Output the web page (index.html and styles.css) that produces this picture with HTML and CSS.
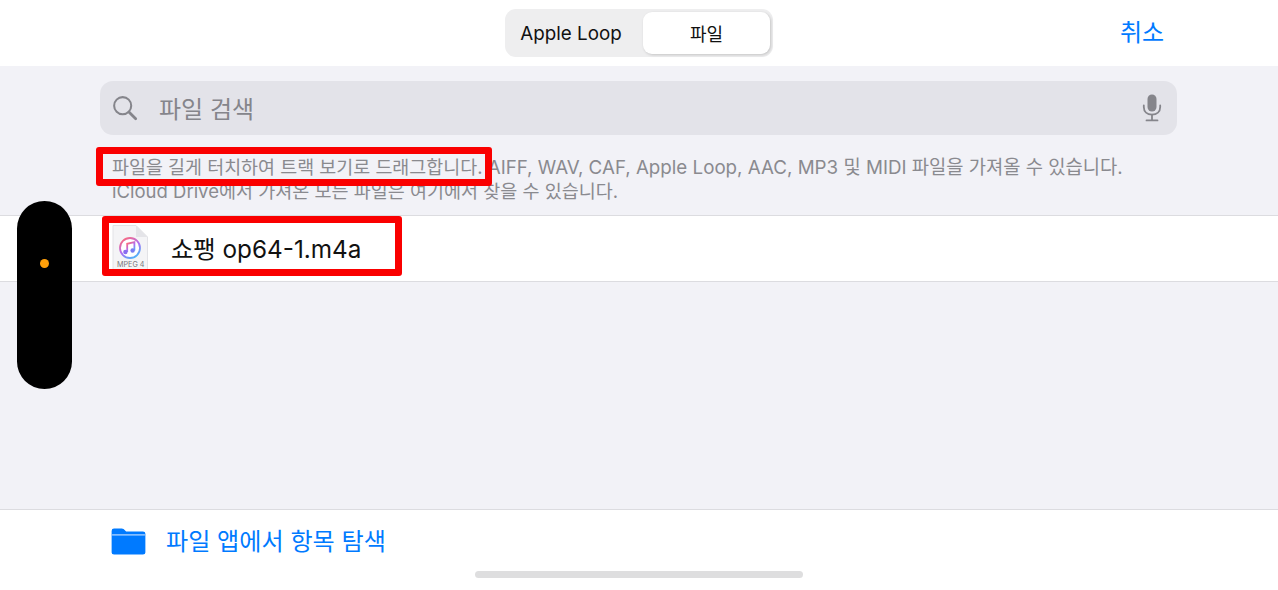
FILE: index.html
```html
<!DOCTYPE html>
<html lang="ko">
<head>
    <meta charset="UTF-8">
    <meta name="viewport" content="width=device-width, initial-scale=1.0">
    <title>파일 검색</title>
    <link rel="stylesheet" href="styles.css">
</head>
<body>
    <div class="screen">
        <header class="topbar">
            <div class="segmented">
                <div class="segment">Apple Loop</div>
                <div class="segment selected">파일</div>
            </div>
            <a class="cancel">취소</a>
        </header>

        <main class="content">
            <div class="search">
                <svg class="search-icon" width="26" height="26" viewBox="0 0 28 28" fill="none" stroke="#85858b">
                    <circle cx="11.5" cy="11.5" r="9.2" stroke-width="2.2"/>
                    <path d="M18.5 18.5 L25.5 25.5" stroke-width="3" stroke-linecap="round"/>
                </svg>
                <span class="search-text">파일 검색</span>
                <svg class="mic-icon" width="20" height="28" viewBox="0 0 20 28" fill="none">
                    <rect x="5.5" y="0.5" width="9" height="17" rx="4.5" fill="#85858b"/>
                    <path d="M1.8 11.5 V13 C1.8 17.8 5.2 20.6 10 20.6 C14.8 20.6 18.2 17.8 18.2 13 V11.5" stroke="#85858b" stroke-width="1.8" stroke-linecap="round"/>
                    <path d="M10 20.6 V26 M4.5 26.4 H15.5" stroke="#85858b" stroke-width="1.8" stroke-linecap="round"/>
                </svg>
            </div>

            <p class="hint"><span class="hint-first">파일을 길게 터치하여 트랙 보기로 드래그합니다.</span> <span class="hint-rest">AIFF, WAV, CAF, Apple Loop, AAC, MP3 및 MIDI 파일을 가져올 수 있습니다.</span><br>iCloud Drive에서 가져온 모든 파일은 여기에서 찾을 수 있습니다.</p>

            <div class="file-row">
                <svg class="file-icon" width="36" height="46" viewBox="0 0 36 46">
                    <defs>
                        <linearGradient id="ring" x1="0.2" y1="0" x2="0.8" y2="1">
                            <stop offset="0" stop-color="#fb6a7d"/>
                            <stop offset="0.5" stop-color="#b06cf2"/>
                            <stop offset="1" stop-color="#45b8f8"/>
                        </linearGradient>
                    </defs>
                    <path d="M1 0.5 H24 L35.5 12 V46 H1 Z" fill="#f4f4f6" stroke="#e2e2e6"/>
                    <path d="M24 0.5 V12 H35.5 Z" fill="#e4e4e8"/>
                    <circle cx="18" cy="23" r="10" fill="#fff" stroke="url(#ring)" stroke-width="1.8"/>
                    <path d="M15.2 27 V18.8 L22.4 17.2 V25.5" fill="none" stroke="url(#ring)" stroke-width="1.8"/>
                    <circle cx="13.4" cy="27" r="2.2" fill="#8a6cf0"/>
                    <circle cx="20.6" cy="25.5" r="2.2" fill="#7a7cf2"/>
                </svg>
                <span class="file-label">MPEG 4</span>
                <span class="file-name">쇼팽 op64-1.m4a</span>
            </div>
        </main>

        <footer class="bottombar">
            <div class="browse">
                <svg width="35" height="27" viewBox="0 0 36 28">
                    <path d="M0.5 3 Q0.5 0.5 3 0.5 H11 Q13 0.5 14.5 2.5 L15.5 3.5 H33 Q35.5 3.5 35.5 6 V25.5 Q35.5 27.5 33 27.5 H3 Q0.5 27.5 0.5 25.5 Z" fill="#007aff"/>
                    <rect x="1" y="6.5" width="34" height="1.3" fill="#b5d7ff"/>
                </svg>
                <span class="browse-text">파일 앱에서 항목 탐색</span>
            </div>
            <div class="home-indicator"></div>
        </footer>

        <!-- annotations and the floating pill sit over the screenshot -->
        <div class="mark mark-hint"></div>
        <div class="mark mark-file"></div>
        <div class="pill"><span class="pill-dot"></span></div>
    </div>
</body>
</html>
```

FILE: styles.css
```css
* {
    margin: 0;
    padding: 0;
    box-sizing: border-box;
}

html, body {
    width: 100%;
    height: 100%;
    overflow: hidden;
}

body {
    font-family: Inter, "Noto Sans CJK KR", sans-serif;
    background-color: #f2f2f7;
}

.screen {
    position: relative;
    width: 1278px;
    height: 590px;
    display: flex;
    flex-direction: column;
}

.topbar {
    height: 66px;
    background-color: #fff;
    position: relative;
    display: flex;
    justify-content: center;
    padding-top: 9px;
}

.segmented {
    width: 268px;
    height: 48px;
    background-color: #eeeeef;
    border-radius: 11px;
    padding: 3px;
    display: flex;
    gap: 2px;
}

.segment {
    flex: 1;
    display: flex;
    align-items: center;
    justify-content: center;
    font-size: 18.8px;
    color: #111;
}

.segment:first-child {
    flex: 0 0 133px;
    padding-right: 7px;
}

.segment.selected {
    background-color: #fff;
    border-radius: 9px;
    box-shadow: 1px 1px 3px rgba(0, 0, 0, 0.18);
    font-size: 18px;
}

.cancel {
    position: absolute;
    top: 16px;
    left: 1120px;
    font-size: 24px;
    line-height: 34px;
    color: #007aff;
}

.content {
    flex: 1;
    padding-top: 15px;
}

.search {
    margin: 0 101px 0 100px;
    height: 54px;
    background-color: #e3e3e9;
    border-radius: 13px;
    display: flex;
    align-items: center;
    padding: 0 15px 0 12px;
}

.search-text {
    flex: 1;
    margin: 0 0 2px 21px;
    font-size: 24px;
    color: #85858b;
}

.hint {
    margin: 21px 0 0 112px;
    font-size: 18.5px;
    line-height: 23.5px;
    color: #8a8a8f;
    white-space: nowrap;
    height: 59px;
}

.hint-first {
    font-size: 18.45px;
}

.hint-rest {
    font-size: 18.75px;
}

.file-row {
    position: relative;
    height: 67px;
    background-color: #fff;
    border-top: 1px solid #dcdce0;
    border-bottom: 1px solid #dcdce0;
    padding-left: 112px;
    display: flex;
    align-items: flex-start;
}

.file-icon {
    margin-top: 9px;
    flex: none;
}

.file-label {
    position: absolute;
    left: 117px;
    top: 44px;
    font-size: 7.2px;
    color: #77777c;
}

.file-name {
    margin: 14px 0 0 23px;
    font-size: 24.3px;
    color: #111;
}

.bottombar {
    height: 81px;
    background-color: #fff;
    border-top: 1px solid #dcdce0;
    position: relative;
}

.browse {
    display: flex;
    align-items: flex-start;
    padding: 18px 0 0 111px;
    gap: 20px;
}

.browse-text {
    font-size: 24.1px;
    line-height: 28px;
    color: #007aff;
}

.home-indicator {
    position: absolute;
    left: 475px;
    top: 61px;
    width: 328px;
    height: 7px;
    border-radius: 4px;
    background-color: #dededf;
}

.mark {
    position: absolute;
    border: 7px solid #fa0000;
    border-radius: 3px;
}

.mark-hint {
    left: 96px;
    top: 147px;
    width: 396px;
    height: 39px;
}

.mark-file {
    left: 102px;
    top: 216px;
    width: 300px;
    height: 60px;
}

.pill {
    position: absolute;
    left: 17px;
    top: 201px;
    width: 55px;
    height: 188px;
    background-color: #000;
    border-radius: 28px;
}

.pill-dot {
    position: absolute;
    left: 23px;
    top: 58px;
    width: 9px;
    height: 9px;
    border-radius: 50%;
    background-color: #ff9f0a;
}
```
